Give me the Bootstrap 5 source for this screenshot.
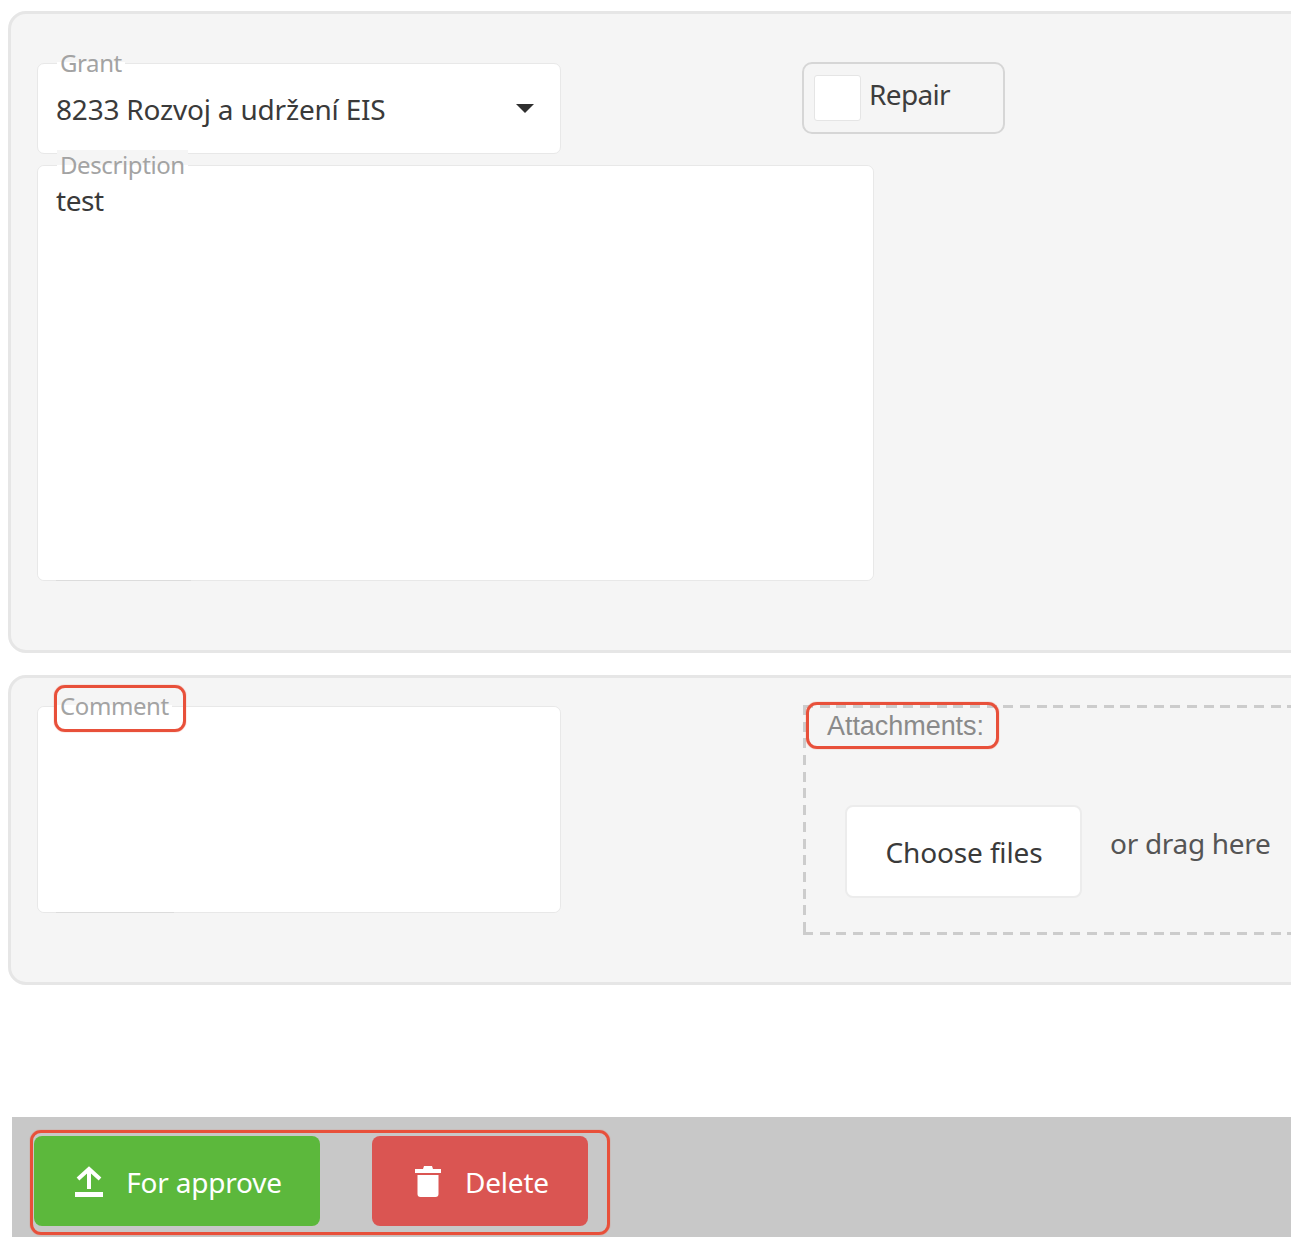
<!DOCTYPE html>
<html lang="en">
<head>
<meta charset="utf-8">
<title>Request form</title>
<link rel="stylesheet" href="https://cdn.jsdelivr.net/npm/bootstrap@5.3.0/dist/css/bootstrap.min.css">
<style>
html, body { height: 1237px; overflow: hidden; }
body { background: #fff; font-family: "Noto Sans", sans-serif; color: #3d3d3d; }
.page-wrap { width: 1320px; padding: 11px 0 0 8px; }
.panel-box { background: #f5f5f5; border: 3px solid #e6e6e6; border-radius: 18px; padding-left: 26px; }
.panel-top { height: 642px; padding-top: 49px; }
.panel-bottom { height: 310px; margin-top: 22px; padding-top: 28px; }
.field-box { position: relative; background: #fff; border: 1px solid #e8e8e8; border-radius: 7px; }
.field-label { position: absolute; left: 19px; top: -16px; padding: 0 3px; font-size: 24px; line-height: 29px; color: #a3a3a3; letter-spacing: -.4px; background: linear-gradient(#f5f5f5 50%, #fff 50%); z-index: 2; }
.field-grant { width: 524px; height: 91px; }
.grant-value { padding: 27px 0 0 18px; font-size: 28px; line-height: 36px; letter-spacing: -.2px; color: #3a3a3a; }
.caret-mark { position: absolute; left: 478px; top: 40px; width: 0; height: 0; border-left: 9px solid transparent; border-right: 9px solid transparent; border-top: 9px solid #2f2f2f; }
.repair-box { width: 203px; height: 72px; margin-left: 241px; margin-top: -1px; border: 2px solid #d6d6d6; border-radius: 10px; padding: 10px 0 0 10px; font-size: 28px; line-height: 40px; letter-spacing: -.65px; }
.check-mark { width: 47px; height: 46px; margin-top: 1px; background: #fff; border: 1px solid #e5e5e5; border-radius: 3px; margin-right: 8px; }
.field-desc { width: 837px; height: 416px; margin-top: 11px; }
.field-comment { width: 524px; height: 207px; flex: none; }
.field-text { display: block; width: 100%; height: 100%; border: 0; border-radius: 7px; background: #fff; resize: none; padding: 16px 18px; font-family: inherit; font-size: 28px; line-height: 36px; letter-spacing: -.4px; color: #3a3a3a; outline: 0; }
.under-line { position: absolute; left: 18px; bottom: -1px; height: 1px; background: #dcdcdc; z-index: 2; }
.line-desc { width: 135px; }
.line-comment { width: 118px; }
.drop-zone { position: relative; width: 560px; height: 230px; margin-left: 242px; margin-top: -1px; padding: 100px 0 0 42px;
  background:
    repeating-linear-gradient(90deg, #ccc 0 10px, transparent 10px 16.7px) left top / 100% 3px no-repeat,
    repeating-linear-gradient(90deg, #ccc 0 10px, transparent 10px 16.7px) left bottom / 100% 3px no-repeat,
    repeating-linear-gradient(180deg, #ccc 0 10px, transparent 10px 16.7px) left top / 3px 100% no-repeat; }
.drop-title { position: absolute; left: 24px; top: 3px; font-family: "Liberation Sans", sans-serif; font-size: 27px; line-height: 36px; letter-spacing: -.05px; color: #8a8a8a; z-index: 2; }
.choose-btn { width: 237px; height: 93px; background: #fff; border: 2px solid #ececec; border-radius: 8px; font-size: 28px; letter-spacing: -.15px; color: #3a3a3a; padding: 0 0 0 1px; flex: none; }
.choose-btn:hover { background: #fff; border-color: #ececec; color: #3a3a3a; }
.drag-hint { margin: 17px 0 0 28px; font-size: 28px; letter-spacing: -.3px; color: #555; white-space: nowrap; }
.mark-box { position: absolute; border: 3px solid #e8503a; border-radius: 11px; box-shadow: 0 0 1px #e8503a; pointer-events: none; z-index: 3; }
.mark-comment { left: 16px; top: -22px; width: 132px; height: 47px; }
.mark-attach { left: 3px; top: -3px; width: 193px; height: 47px; }
.action-bar { height: 120px; margin: 132px 0 0 4px; background: #c8c8c8; padding: 13px 0 0 18px; }
.action-group { width: 580px; height: 105px; border: 3px solid #e8503a; border-radius: 11px; box-shadow: 0 0 1px #e8503a; padding: 3px 0 0 1px; gap: 52px; }
.act-btn { height: 90px; border: 0; border-radius: 8px; color: #fff; font-size: 28px; padding: 0; }
.act-btn:hover, .act-btn:focus { color: #fff; }
.act-text { padding-top: 2px; letter-spacing: -.2px; }
.act-approve { width: 286px; background: #5cb83c; gap: 23px; padding-left: 3px; }
.act-approve:hover { background: #5cb83c; }
.act-delete { width: 216px; background: #da5552; gap: 24px; padding-left: 4px; }
.act-delete:hover { background: #da5552; }
</style>
</head>
<body>
<div class="page-wrap">
  <section class="panel-box panel-top">
    <div class="d-flex align-items-start">
      <div class="field-box field-grant">
        <span class="field-label">Grant</span>
        <div class="grant-value">8233 Rozvoj a udržení EIS</div>
        <span class="caret-mark"></span>
      </div>
      <label class="repair-box d-flex align-items-start">
        <span class="check-mark"></span>
        <span>Repair</span>
      </label>
    </div>
    <div class="field-box field-desc">
      <span class="field-label">Description</span>
      <textarea class="field-text" aria-label="Description">test</textarea>
      <span class="under-line line-desc"></span>
    </div>
  </section>
  <section class="panel-box panel-bottom d-flex align-items-start">
    <div class="field-box field-comment">
      <span class="field-label">Comment</span>
      <textarea class="field-text" aria-label="Comment"></textarea>
      <span class="under-line line-comment"></span>
      <span class="mark-box mark-comment"></span>
    </div>
    <div class="drop-zone d-flex align-items-start">
      <span class="mark-box mark-attach"></span>
      <span class="drop-title">Attachments:</span>
      <button type="button" class="btn choose-btn">Choose files</button>
      <span class="drag-hint">or drag here</span>
    </div>
  </section>
  <div class="action-bar">
    <div class="action-group d-flex align-items-start">
      <button type="button" class="btn act-btn act-approve d-flex align-items-center justify-content-center">
        <svg width="28" height="31" viewBox="0 0 28 31" aria-hidden="true"><path fill="none" stroke="#fff" stroke-width="4" d="M3 13 14 3l11 10M14 3v20"/><path fill="#fff" d="M0 26h28v5H0z"/></svg>
        <span class="act-text">For approve</span>
      </button>
      <button type="button" class="btn act-btn act-delete d-flex align-items-center justify-content-center">
        <svg width="26" height="31" viewBox="0 0 26 31" aria-hidden="true"><path fill="#fff" d="M9 0h8l1 3h8v4H0V3h8zM2.500 9h21v19a3 3 0 0 1-3 3h-15a3 3 0 0 1-3-3z"/></svg>
        <span class="act-text">Delete</span>
      </button>
    </div>
  </div>
</div>
</body>
</html>
